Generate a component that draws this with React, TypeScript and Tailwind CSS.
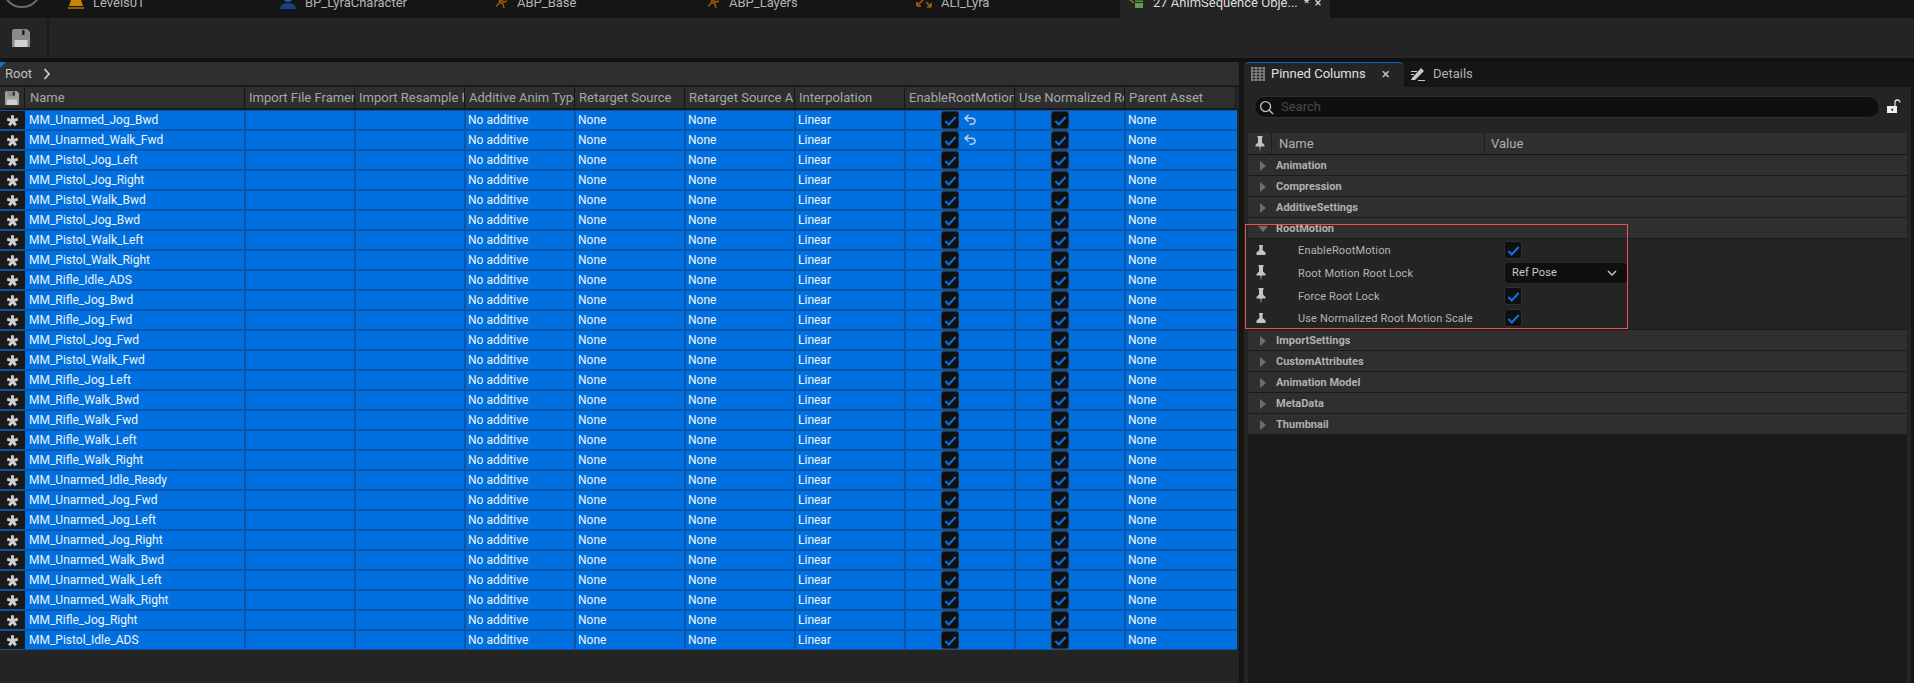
import React from 'react';

const ROWS = [
  'MM_Unarmed_Jog_Bwd', 'MM_Unarmed_Walk_Fwd', 'MM_Pistol_Jog_Left', 'MM_Pistol_Jog_Right', 'MM_Pistol_Walk_Bwd',
  'MM_Pistol_Jog_Bwd', 'MM_Pistol_Walk_Left', 'MM_Pistol_Walk_Right', 'MM_Rifle_Idle_ADS', 'MM_Rifle_Jog_Bwd',
  'MM_Rifle_Jog_Fwd', 'MM_Pistol_Jog_Fwd', 'MM_Pistol_Walk_Fwd', 'MM_Rifle_Jog_Left', 'MM_Rifle_Walk_Bwd',
  'MM_Rifle_Walk_Fwd', 'MM_Rifle_Walk_Left', 'MM_Rifle_Walk_Right', 'MM_Unarmed_Idle_Ready', 'MM_Unarmed_Jog_Fwd',
  'MM_Unarmed_Jog_Left', 'MM_Unarmed_Jog_Right', 'MM_Unarmed_Walk_Bwd', 'MM_Unarmed_Walk_Left', 'MM_Unarmed_Walk_Right',
  'MM_Rifle_Jog_Right', 'MM_Pistol_Idle_ADS',
];

const COLUMNS = [
  'Import File Framerate', 'Import Resample Framerate', 'Additive Anim Type', 'Retarget Source',
  'Retarget Source Asset', 'Interpolation', 'EnableRootMotion', 'Use Normalized Root Motion Scale',
];

const SaveIcon: React.FC<{ className?: string }> = ({ className }) => (
  <svg viewBox="0 0 18 18" className={className}>
    <path d="M0 1.5 1.5 0H15l3 3v15H0z" fill="currentColor" />
    <rect x="3" y="0" width="10" height="7" fill="#8a8a8a" />
    <rect x="10" y="1" width="2.5" height="5" fill="#242424" />
    <rect x="2.5" y="11" width="13" height="7" fill="#d0d0d0" />
  </svg>
);

const Star: React.FC = () => (
  <svg viewBox="0 0 14 14" className="h-[13px] w-[13px]">
    <path
      d="M7 7.4V1.4M7 7.4l5.7-1.9M7 7.4l3.5 4.9M7 7.4l-3.5 4.9M7 7.4 1.3 5.5"
      fill="none"
      stroke="#cfcfcf"
      strokeWidth="3.1"
    />
  </svg>
);

const Check: React.FC = () => (
  <div className="flex h-[18px] w-[18px] items-center justify-center rounded-[3px] border border-[#2f2f2f] bg-[#0f0f0f]">
    <svg viewBox="0 0 12 12" className="h-[13px] w-[13px]">
      <path d="M1.2 6.4 4.4 9.6 10.8 2.8" fill="none" stroke="#0a72dd" strokeWidth="2" />
    </svg>
  </div>
);

const ResetArrow: React.FC = () => (
  <svg viewBox="0 0 12 12" className="h-[12px] w-[12px]">
    <path d="M4.5 1 1 4.2l3.5 3.2M1.5 4.2H8a3 3 0 0 1 3 3v0a3 3 0 0 1-3 3H5.5" fill="none" stroke="#c4cfdc" strokeWidth="1.4" />
  </svg>
);

const Pin: React.FC<{ needle?: boolean }> = ({ needle }) =>
  needle ? (
    <svg viewBox="0 0 10 16" className="h-[16px] w-[10px]">
      <path d="M2.5 0h5v1.5L7 2v4.5L9.5 9v1.5h-9V9L3 6.5V2l-.5-.5zM4.4 10.5h1.2L5 16z" fill="#c4c4c4" />
    </svg>
  ) : (
    <svg viewBox="0 0 10 10" className="h-[10px] w-[10px]">
      <path d="M3 0h4v1L6.6 1.5V5L9.5 7.5V10H.5V7.5L3.4 5V1.5L3 1z" fill="#c4c4c4" />
    </svg>
  );

const Triangle: React.FC<{ open?: boolean }> = ({ open }) =>
  open ? (
    <svg viewBox="0 0 10 6" className="h-[6px] w-[10px]">
      <path d="M0 0h10L5 6z" fill="#6e6e6e" />
    </svg>
  ) : (
    <svg viewBox="0 0 6 10" className="h-[10px] w-[6px]">
      <path d="M0 0l6 5-6 5z" fill="#6e6e6e" />
    </svg>
  );

const LevelIcon = () => (
  <svg viewBox="0 0 16 20" className="mb-[8px] h-[20px] w-[16px]">
    <path d="M0 18h16v2H0z" fill="#8a5a10" />
    <path d="M1 17 5 5l1.5 5L8 2l1.5 8L11 5l4 12z" fill="#c98208" />
  </svg>
);
const PawnIcon = () => (
  <svg viewBox="0 0 16 20" className="mb-[8px] h-[20px] w-[16px]">
    <circle cx="8" cy="8" r="5" fill="#2a5bb0" />
    <path d="M0 20c0-4 3-6 8-6s8 2 8 6z" fill="#1c3f80" />
  </svg>
);
const RunIcon = () => (
  <svg viewBox="0 0 16 20" className="mb-[8px] h-[20px] w-[16px]">
    <circle cx="11" cy="9" r="1.6" fill="#c36d10" />
    <path d="M8 10.5 4 9M8 10.5l4 2.5 3-1M8 10.5l-1 4-3 3M8 13l3 2 1 4" fill="none" stroke="#96540c" strokeWidth="1.6" />
  </svg>
);
const ArrowsIcon = () => (
  <svg viewBox="0 0 16 20" className="mb-[8px] h-[20px] w-[16px]">
    <path d="M1 17 7 11M1 17v-4M1 17h4M15 18 10 13M15 18v-4M15 18h-4M5 9l3-3 2 2" fill="none" stroke="#a05c0c" strokeWidth="1.7" />
  </svg>
);
const SequenceIcon = () => (
  <svg viewBox="0 0 16 20" className="mb-[8px] h-[20px] w-[16px]">
    <path d="M0 9 6 14" stroke="#5a8a4a" strokeWidth="1.5" fill="none" />
    <rect x="7" y="14" width="8" height="5" fill="#5f9a50" />
    <path d="M7 11.5h8V13H7z" fill="#5f9a50" />
  </svg>
);

const TABS = [
  { label: 'Levels01', icon: <LevelIcon /> },
  { label: 'BP_LyraCharacter', icon: <PawnIcon /> },
  { label: 'ABP_Base', icon: <RunIcon /> },
  { label: 'ABP_Layers', icon: <RunIcon /> },
  { label: 'ALI_Lyra', icon: <ArrowsIcon /> },
];

const TabStrip: React.FC = () => (
  <div className="flex h-[18px] shrink-0 overflow-hidden bg-[#151515]">
    <div className="w-[60px] shrink-0 overflow-hidden">
      <div className="-mt-[32px] ml-[2px] h-[40px] w-[40px] rounded-full border-2 border-[#6a6a6a]" />
    </div>
    {TABS.map((tab) => (
      <div key={tab.label} className="-mt-[12px] flex h-[30px] w-[212px] shrink-0 items-center gap-[9px] pl-[8px] text-[13px] text-[#b4b4b4]">
        {tab.icon}
        <span>{tab.label}</span>
      </div>
    ))}
    <div className="flex h-[18px] w-[210px] shrink-0 items-start bg-[#242424]">
      <div className="-mt-[12px] flex h-[30px] items-center gap-[9px] pl-[8px] text-[13px] whitespace-nowrap text-[#dedede]">
        <SequenceIcon />
        <span>27 AnimSequence Obje...</span>
        <span className="-ml-[3px]">*</span>
        <span className="-ml-[4px]">×</span>
      </div>
    </div>
  </div>
);

const AnimTable: React.FC = () => (
  <div className="flex w-[1239px] shrink-0 flex-col bg-[#242424]">
    <div className="relative flex h-[23px] shrink-0 items-center gap-[11px] bg-[#2f2f2f] pl-[5px] text-[13px] text-[#c0c0c0]">
      <div className="absolute top-0 left-0 h-0 w-0 border-t-[6px] border-r-[6px] border-t-[#0a72dd] border-r-transparent" />
      <span>Root</span>
      <svg viewBox="0 0 8 12" className="h-[12px] w-[8px]">
        <path d="M1.5 1 6 6l-4.5 5" fill="none" stroke="#c8c8c8" strokeWidth="1.8" />
      </svg>
    </div>
    <div className="h-[2px] shrink-0 bg-[#1a1a1a]" />
    <div className="flex h-[21px] w-[1234px] shrink-0 gap-[1px] bg-[#151515] text-[13px] text-[#a6a6a6]">
      <div className="flex w-[24px] shrink-0 items-center justify-center bg-[#2f2f2f] text-[#a0a0a0]">
        <SaveIcon className="h-[14px] w-[14px]" />
      </div>
      <div className="flex w-[219px] shrink-0 items-center bg-[#2f2f2f] pl-[5px]">Name</div>
      {COLUMNS.map((col) => (
        <div key={col} className="flex w-[109px] shrink-0 items-center overflow-hidden bg-[#2f2f2f] pl-[4px] whitespace-nowrap">
          {col}
        </div>
      ))}
      <div className="flex flex-1 items-center bg-[#2f2f2f] pl-[4px]">Parent Asset</div>
    </div>
    <div className="h-[2px] shrink-0 bg-[#1a1a1a]" />
    <div className="flex w-[1237px] flex-col">
      {ROWS.map((name, i) => (
        <div key={name} className="flex h-[20px] bg-[#0a55a8] py-[1px] text-[12px] text-[#f0f6fd]">
          <div className="flex w-[25px] shrink-0 items-center justify-center bg-[#1a1a1a]">
            <Star />
          </div>
          <div className="flex w-[219px] shrink-0 items-center bg-[#0070e0] pl-[4px]">{name}</div>
          <div className="ml-[2px] flex h-full flex-1 gap-[2px]">
            <div className="w-[108px] shrink-0 bg-[#0070e0]" />
            <div className="w-[108px] shrink-0 bg-[#0070e0]" />
            <div className="flex w-[108px] shrink-0 items-center bg-[#0070e0] pl-[2px]">No additive</div>
            <div className="flex w-[108px] shrink-0 items-center bg-[#0070e0] pl-[2px]">None</div>
            <div className="flex w-[108px] shrink-0 items-center bg-[#0070e0] pl-[2px]">None</div>
            <div className="flex w-[108px] shrink-0 items-center bg-[#0070e0] pl-[2px]">Linear</div>
            <div className="flex w-[108px] shrink-0 items-center gap-[5px] bg-[#0070e0] pl-[35px]">
              <Check />
              {i < 2 && <ResetArrow />}
            </div>
            <div className="flex w-[108px] shrink-0 items-center bg-[#0070e0] pl-[35px]">
              <Check />
            </div>
            <div className="flex flex-1 items-center bg-[#0070e0] pl-[2px]">None</div>
          </div>
        </div>
      ))}
    </div>
  </div>
);

const Section: React.FC<{ label: string; open?: boolean }> = ({ label, open }) => (
  <div className="flex h-[21px] shrink-0 items-center border-b border-[#1a1a1a] bg-[#2f2f2f] pt-[2px] text-[11px] font-bold text-[#b0b0b0]">
    <div className="flex w-[28px] shrink-0 justify-center pl-[2px]">
      <Triangle open={open} />
    </div>
    {label}
  </div>
);

const PropRow: React.FC<{ label: string; needle?: boolean; heightClass: string; children: React.ReactNode }> = ({ label, needle, heightClass, children }) => (
  <div className={`flex shrink-0 items-center bg-[#242424] text-[11px] tracking-[0.15px] text-[#b4b4b4] ${heightClass}`}>
    <div className="flex w-[26px] shrink-0 justify-center">
      <Pin needle={needle} />
    </div>
    <div className="w-[230px] shrink-0 pt-[3px] pl-[24px]">{label}</div>
    {children}
  </div>
);

const SidePanel: React.FC = () => (
  <div className="relative flex min-w-0 flex-1 flex-col">
    <div className="flex h-[25px] shrink-0 bg-[#151515]">
      <div className="flex w-[160px] items-center rounded-t-[5px] border-t border-[#0a62c0] bg-[#242424] pb-[2px] pl-[7px] text-[13px] text-[#e0e0e0]">
        <svg viewBox="0 0 14 14" className="h-[14px] w-[14px]">
          <path d="M0 1h14M0 4h14M0 7h14M0 10h14M0 13h14M1 0v14M5 0v14M9 0v14M13 0v14" stroke="#9a9a9a" strokeWidth="1.1" fill="none" />
        </svg>
        <span className="ml-[6px]">Pinned Columns</span>
        <span className="ml-[16px] text-[15px] leading-none text-[#c8c8c8]">×</span>
      </div>
      <div className="flex items-center pb-[2px] pl-[6px] text-[13px] text-[#b0b0b0]">
        <svg viewBox="0 0 16 16" className="h-[16px] w-[16px]">
          <path d="M2 12 11 2l3 3-9 9H1zM8 14h7v1H8zM1 5h6v1H1zM1 8h3v1H1z" fill="#c8c8c8" />
        </svg>
        <span className="ml-[7px]">Details</span>
      </div>
    </div>
    <div className="flex min-h-0 flex-1 flex-col bg-[#242424] px-[4px]">
      <div className="flex h-[46px] shrink-0 items-start pt-[9px] pl-[6px]">
        <div className="flex h-[22px] w-[626px] shrink-0 items-center rounded-full border border-[#2f2f2f] bg-[#0f0f0f] pl-[4px] text-[13px] text-[#484848]">
          <svg viewBox="0 0 16 16" className="h-[15px] w-[15px]">
            <circle cx="7" cy="7" r="5.3" fill="none" stroke="#c0c0c0" strokeWidth="1.4" />
            <path d="m11 11 4 4" stroke="#c0c0c0" strokeWidth="1.4" />
          </svg>
          <span className="ml-[7px]">Search</span>
        </div>
        <svg viewBox="0 0 14 16" className="mt-[3px] ml-[7px] h-[16px] w-[14px] shrink-0">
          <path d="M8 7V3.5a2.5 2.5 0 0 1 5 0" fill="none" stroke="#e0e0e0" strokeWidth="1.3" />
          <path d="M0 7h10v7H0z" fill="#f0f0f0" />
          <rect x="4.5" y="9.5" width="1.4" height="2.5" fill="#242424" />
        </svg>
      </div>
      <div className="flex h-[21px] shrink-0 bg-[#2f2f2f] text-[13px] text-[#b0b0b0]">
        <div className="flex w-[24px] shrink-0 items-center justify-center border-r border-[#1f1f1f]">
          <Pin needle />
        </div>
        <div className="flex w-[213px] shrink-0 items-center border-r border-[#1f1f1f] pl-[7px]">Name</div>
        <div className="flex items-center pl-[6px]">Value</div>
      </div>
      <div className="h-[1px] shrink-0 bg-[#151515]" />
      <Section label="Animation" />
      <Section label="Compression" />
      <Section label="AdditiveSettings" />
      <Section label="RootMotion" open />
      <PropRow label="EnableRootMotion" heightClass="h-[22px]">
        <Check />
      </PropRow>
      <PropRow label="Root Motion Root Lock" needle heightClass="h-[24px]">
        <div className="flex h-[22px] w-[124px] items-center justify-between rounded-[4px] border border-[#2a2a2a] bg-[#0f0f0f] pr-[10px] pl-[7px] text-[#c8c8c8]">
          Ref Pose
          <svg viewBox="0 0 10 6" className="h-[6px] w-[10px]">
            <path d="M1 1l4 4 4-4" fill="none" stroke="#c8c8c8" strokeWidth="1.4" />
          </svg>
        </div>
      </PropRow>
      <PropRow label="Force Root Lock" needle heightClass="h-[22px]">
        <Check />
      </PropRow>
      <PropRow label="Use Normalized Root Motion Scale" heightClass="h-[22px]">
        <Check />
      </PropRow>
      <div className="h-[1px] shrink-0 bg-[#1a1a1a]" />
      <Section label="ImportSettings" />
      <Section label="CustomAttributes" />
      <Section label="Animation Model" />
      <Section label="MetaData" />
      <Section label="Thumbnail" />
      <div className="flex-1 bg-[#1a1a1a]" />
    </div>
    {/* red annotation drawn over the panel */}
    <div className="absolute top-[162px] left-[1px] h-[105px] w-[383px] border border-[#f25252]" />
  </div>
);

export default function App() {
  return (
    <div className="flex h-[683px] w-[1914px] flex-col overflow-hidden bg-[#151515] font-['Roboto',sans-serif]">
      <TabStrip />
      <div className="flex h-[40px] shrink-0 items-center bg-[#242424]">
        <div className="flex w-[47px] justify-center pr-[6px] text-[#8a8a8a]">
          <SaveIcon className="h-[18px] w-[18px]" />
        </div>
        <div className="h-[38px] w-[2px] bg-[#1a1a1a]" />
      </div>
      <div className="h-[4px] shrink-0 bg-[#111111]" />
      <div className="flex min-h-0 flex-1 pr-[3px]">
        <AnimTable />
        <div className="w-[5px] shrink-0 bg-[#151515]" />
        <SidePanel />
      </div>
    </div>
  );
}
